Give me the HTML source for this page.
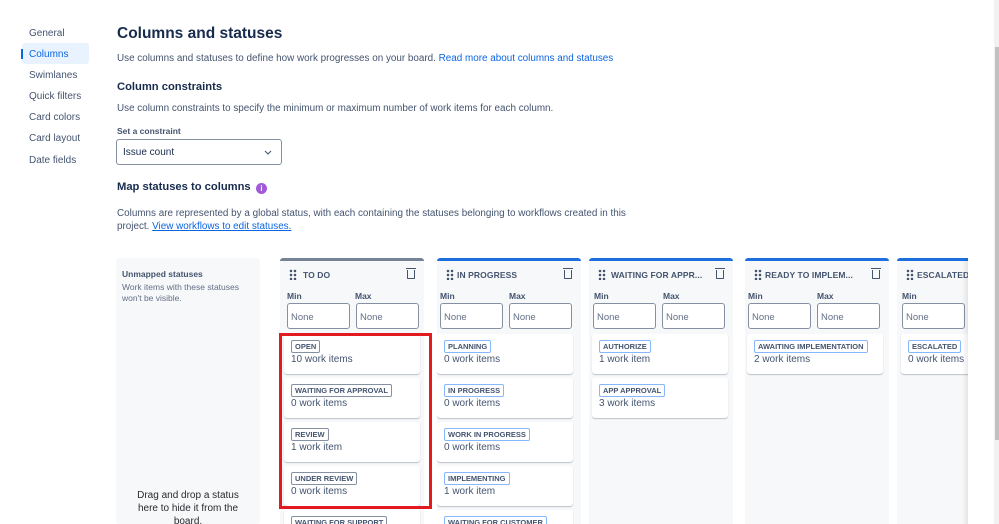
<!DOCTYPE html>
<html style="overflow:hidden;height:524px"><head><meta charset="utf-8"><style>
*{box-sizing:border-box;margin:0;padding:0}
html,body{overflow:hidden}
body{width:999px;height:524px;background:#fff;font-family:"Liberation Sans",sans-serif;color:#292a2e;position:relative}
.a{position:absolute;white-space:nowrap}
.nav{left:29px;font-size:10px;color:#44546f}
.p{font-size:9.9px;color:#44546f}
.h{font-weight:bold;color:#172b4d}
.lnk{color:#0c66e4}
.panel{position:absolute;top:258px;width:144px;height:266px;background:#f7f8f9;border-radius:4px}
.col{position:absolute;top:258px;width:144px;height:266px;background:#f7f8f9;border-top:3px solid #1d6fe0;border-radius:3px 3px 0 0;overflow:hidden}
.col.gray{border-top-color:#758195}
.ch{position:absolute;top:9px;left:10px;font-size:8.5px;font-weight:bold;color:#44546f;letter-spacing:.1px}
.dots{position:absolute;top:8px;left:9px;width:8px;height:11px;background:radial-gradient(circle,#44546f 1.2px,transparent 1.4px) 0 0/4px 4px}
.trash{position:absolute;top:9px;right:9px;width:8px;height:9px;border:1.3px solid #44546f;border-top:none;border-radius:0 0 1px 1px}
.trash:before{content:"";position:absolute;left:-2px;top:-2px;width:10px;height:1.3px;background:#44546f}
.ml{position:absolute;top:30px;font-size:8.5px;font-weight:bold;color:#44546f}
.in{position:absolute;top:42px;width:63px;height:26px;border:1px solid #8590a2;border-radius:3px;background:#fff;font-size:9.5px;color:#626f86;padding:8px 0 0 3px}
.card{position:absolute;left:4px;width:136px;height:40px;background:#fff;border-radius:3px;box-shadow:0 1px 1px rgba(9,30,66,.25)}
.lz{position:absolute;left:7px;top:6px;font-size:7.5px;font-weight:bold;color:#44546f;border:1px solid #85b8ff;border-radius:2px;padding:1px 3px;line-height:9px;background:#fff}
.gray .lz{border-color:#8590a2}
.ct{position:absolute;left:7px;top:20px;font-size:10px;color:#44546f}
</style></head><body>
<div class="a" style="left:22px;top:43px;width:67px;height:21px;background:#e9f2ff;border-radius:3px"></div>
<div class="a" style="left:21px;top:49px;width:2px;height:10px;background:#0c66e4"></div>
<div class="a nav" style="top:28px">General</div>
<div class="a nav" style="top:49px;color:#0c66e4">Columns</div>
<div class="a nav" style="top:70px">Swimlanes</div>
<div class="a nav" style="top:91px">Quick filters</div>
<div class="a nav" style="top:112px">Card colors</div>
<div class="a nav" style="top:133px">Card layout</div>
<div class="a nav" style="top:155px">Date fields</div>

<div class="a h" style="left:117px;top:25px;font-size:15.5px">Columns and statuses</div>
<div class="a p" style="left:117px;top:53px">Use columns and statuses to define how work progresses on your board. <span class="lnk">Read more about columns and statuses</span></div>
<div class="a h" style="left:117px;top:81px;font-size:11.2px">Column constraints</div>
<div class="a p" style="left:117px;top:103px">Use column constraints to specify the minimum or maximum number of work items for each column.</div>
<div class="a" style="left:117px;top:126px;font-size:8.5px;font-weight:bold;color:#44546f">Set a constraint</div>
<div class="a" style="left:116px;top:139px;width:166px;height:26px;border:1px solid #8590a2;border-radius:3px;font-size:10px;color:#172b4d;padding:7px 0 0 6px">Issue count
<svg style="position:absolute;right:9px;top:10px" width="8" height="5" viewBox="0 0 8 5"><path d="M1 1l3 3 3-3" fill="none" stroke="#44546f" stroke-width="1.1"/></svg></div>
<div class="a h" style="left:117px;top:181px;font-size:11.2px">Map statuses to columns</div>
<div class="a" style="left:256px;top:183px;width:11px;height:11px;border-radius:50%;background:#a259d9;color:#fff;font-size:8px;font-weight:bold;text-align:center;line-height:11px">i</div>
<div class="a p" style="left:117px;top:208px">Columns are represented by a global status, with each containing the statuses belonging to workflows created in this</div>
<div class="a p" style="left:117px;top:221px">project. <span class="lnk" style="text-decoration:underline">View workflows to edit statuses.</span></div>

<div class="panel" style="left:116px">
<div class="a" style="left:6px;top:11px;font-size:8.5px;font-weight:bold;color:#44546f">Unmapped statuses</div>
<div class="a" style="left:6px;top:24px;font-size:8.5px;color:#626f86;line-height:10.5px">Work items with these statuses<br>won't be visible.</div>
<div class="a" style="left:0;width:144px;top:231px;font-size:10px;color:#292a2e;text-align:center;line-height:13px;white-space:normal;padding:0 16px">Drag and drop a status here to hide it from the board.</div>
</div>

<div class="col gray" style="left:280px">
<div class="dots"></div><div class="ch" style="left:23px">TO DO</div><div class="trash"></div>
<div class="ml" style="left:7px">Min</div><div class="ml" style="left:75px">Max</div>
<div class="in" style="left:7px">None</div><div class="in" style="left:76px">None</div>
<div class="card" style="top:73px"><div class="lz">OPEN</div><div class="ct">10 work items</div></div>
<div class="card" style="top:117px"><div class="lz">WAITING FOR APPROVAL</div><div class="ct">0 work items</div></div>
<div class="card" style="top:161px"><div class="lz">REVIEW</div><div class="ct">1 work item</div></div>
<div class="card" style="top:205px"><div class="lz">UNDER REVIEW</div><div class="ct">0 work items</div></div>
<div class="card" style="top:249px"><div class="lz">WAITING FOR SUPPORT</div></div>
</div>

<div class="col" style="left:437px">
<div class="dots"></div><div class="ch" style="left:20px">IN PROGRESS</div><div class="trash"></div>
<div class="ml" style="left:3px">Min</div><div class="ml" style="left:72px">Max</div>
<div class="in" style="left:3px">None</div><div class="in" style="left:72px">None</div>
<div class="card" style="top:73px;left:0"><div class="lz">PLANNING</div><div class="ct">0 work items</div></div>
<div class="card" style="top:117px;left:0"><div class="lz">IN PROGRESS</div><div class="ct">0 work items</div></div>
<div class="card" style="top:161px;left:0"><div class="lz">WORK IN PROGRESS</div><div class="ct">0 work items</div></div>
<div class="card" style="top:205px;left:0"><div class="lz">IMPLEMENTING</div><div class="ct">1 work item</div></div>
<div class="card" style="top:249px;left:0"><div class="lz">WAITING FOR CUSTOMER</div></div>
</div>

<div class="col" style="left:589px">
<div class="dots"></div><div class="ch" style="left:22px">WAITING FOR APPR...</div><div class="trash"></div>
<div class="ml" style="left:5px">Min</div><div class="ml" style="left:74px">Max</div>
<div class="in" style="left:4px">None</div><div class="in" style="left:73px">None</div>
<div class="card" style="top:73px;left:3px"><div class="lz">AUTHORIZE</div><div class="ct">1 work item</div></div>
<div class="card" style="top:117px;left:3px"><div class="lz">APP APPROVAL</div><div class="ct">3 work items</div></div>
</div>

<div class="col" style="left:745px">
<div class="dots"></div><div class="ch" style="left:20px">READY TO IMPLEM...</div><div class="trash"></div>
<div class="ml" style="left:3px">Min</div><div class="ml" style="left:72px">Max</div>
<div class="in" style="left:3px">None</div><div class="in" style="left:72px">None</div>
<div class="card" style="top:73px;left:2px"><div class="lz">AWAITING IMPLEMENTATION</div><div class="ct">2 work items</div></div>
</div>

<div class="a" style="left:897px;top:258px;width:71px;height:266px;overflow:hidden">
<div class="col" style="left:0;top:0">
<div class="dots"></div><div class="ch" style="left:20px">ESCALATED</div>
<div class="ml" style="left:5px">Min</div>
<div class="in" style="left:5px">None</div>
<div class="card" style="top:73px;left:4px"><div class="lz">ESCALATED</div><div class="ct">0 work items</div></div>
</div>
<div class="a" style="right:0;top:0;width:6px;height:266px;background:linear-gradient(to right,rgba(0,0,0,0),rgba(0,0,0,.08))"></div>
</div>

<div class="a" style="left:994px;top:0;width:5px;height:524px;background:#f1f1f1"></div>
<div class="a" style="left:995px;top:47px;width:4px;height:393px;background:#c1c1c1"></div>

<div class="a" style="left:279px;top:333px;width:153px;height:176px;border:3px solid #e2191e"></div>
</body></html>
